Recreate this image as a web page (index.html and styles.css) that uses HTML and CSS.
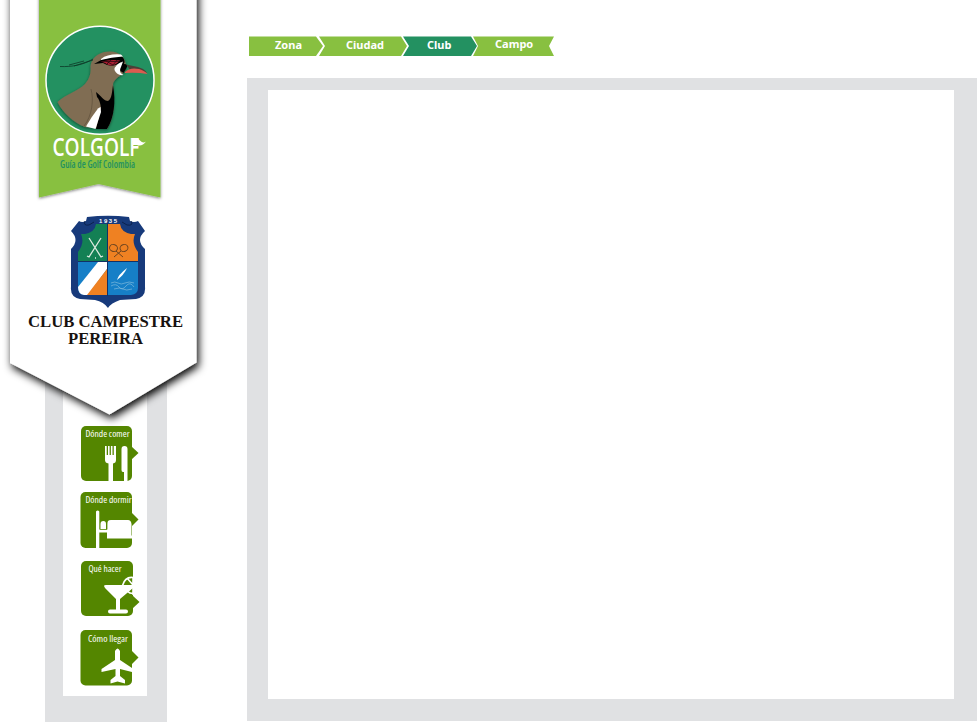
FILE: index.html
```html
<!DOCTYPE html>
<html lang="es">
<head>
<meta charset="utf-8">
<title>Colgolf - Club Campestre Pereira</title>
<link rel="stylesheet" href="styles.css">
</head>
<body>
<div class="page">
  <aside class="sidebar">
    <div class="rail">
      <nav class="services">
        <a class="service">
          <svg viewBox="0 0 60 56"><rect x="1" width="51" height="55" rx="5"/><path d="M51 20L58.500 27L51 34Z"/>
            <text x="5.500" y="11" textLength="44" lengthAdjust="spacingAndGlyphs">Dónde comer</text>
            <path class="ink" d="M25 20h1.700v9h1.300v-9h1.600v9h1.300v-9h1.600v9h1.300v-9H36v14q0 3-3 3.500V55h-4.500V37.500Q25 37 25 34ZM41.500 23q0-3 3-3t3 3v32H44V46h-1q-1.500 0-1.500-2Z"/></svg>
        </a>
        <a class="service">
          <svg viewBox="0 0 60 56"><rect x=".5" width="51.500" height="56" rx="5"/><path d="M51 20L58.500 27.500L51 35Z"/>
            <text x="5.500" y="11" textLength="46" lengthAdjust="spacingAndGlyphs">Dónde dormir</text>
            <path class="ink" d="M16 19.500q1.700-2 3.300 0V37H27v-5q0-4 4-4h17q3 0 3.500 4v11.500h.5V46.500H27V40.500h-7.700V56H16ZM20.500 37v-5q0-3 2.800-3t2.700 3v5Z"/><path class="thin" d="M19.500 37.500H27V29"/></svg>
        </a>
        <a class="service">
          <svg viewBox="0 0 60 56"><rect x="1" width="52" height="55" rx="5"/><path d="M52 34L59.500 41L52 48Z"/>
            <text x="8.500" y="11" textLength="33" lengthAdjust="spacingAndGlyphs">Qué hacer</text>
            <path class="ink" d="M24 25q0-1 2-1h27v3L40 38v10.500h6q2 0 2 2t-2 2H30q-2 0-2-2t2-2h6V38L25 27Z"/><path class="line" d="M53 16.500q-8-1-10.500 8M47 17l6 7M53 16v18M46 24.500q0 8 7 8M53 24.500l-6 6"/></svg>
        </a>
        <a class="service">
          <svg viewBox="0 0 60 56"><rect x=".5" width="51.500" height="55.500" rx="5"/><path d="M51 20L58.500 27.500L51 35Z"/>
            <text x="8" y="12" textLength="40" lengthAdjust="spacingAndGlyphs">Cómo llegar</text>
            <path class="ink" d="M35 21q2.700-5 5 0v9l12 8v4l-12-3v7l5 4v3.500l-7.500-2-7 2V50l5-4v-7L21.500 42v-3l13.500-9Z"/></svg>
        </a>
      </nav>
    </div>
    <svg class="banner" viewBox="0 0 220 430">
      <defs>
        <filter id="deep" x="-20%" y="-10%" width="140%" height="120%"><feDropShadow dx="2" dy="4" stdDeviation="4.500" flood-color="#000" flood-opacity="1"/></filter>
        <filter id="soft" x="-20%" y="-10%" width="140%" height="120%"><feDropShadow dx="0" dy="1" stdDeviation="1.500" flood-opacity=".5"/></filter>
      </defs>
      <path filter="url(#deep)" fill="#fff" d="M10-20H196.500V362.500L109.500 414.500L10 363Z"/>
      <path filter="url(#soft)" fill="#88c040" d="M39-10H160.500V197.500L98.500 184L39 197.500Z"/>
      <circle cx="100" cy="80.300" r="54" fill="#239161" stroke="#fff" stroke-width="1.500"/>
      <g filter="url(#soft)">
        <path fill="#806d52" d="M57.500 102C66 94 78 91 85 84C90 78 91 73 90.500 66C92 56 101 51.500 110 51.500C119 51.500 125 57 126 65C127 75 115 76 113 84C114 96 116 116 107 129L85 127C74 123 62 112 57.500 102Z"/>
      </g>
      <path fill="none" stroke="#5e503c" stroke-width=".7" d="M91 89C94 100 92 116 84 126"/>
      <path fill="#000" d="M96 92C101 96 104 101 108 101C112 99 112 91 113 85C116 102 114 118 107 129H96L101 108Q100 100 97 97Z"/>
      <path fill="#fff" d="M100.500 107L101 112L95.500 129L86 126.500Q92 116 98 108.500Z"/>
      <path fill="#000" d="M94 64L103 59L121 55.500Q126 60 124 64Q129 64 126 69L123.500 73L119 70L121 62Q112 69 103 63Z"/>
      <path fill="#fff" d="M101 59Q108 53.500 121 54.500L123 56.500Q111 57 101 60Z"/>
      <path fill="#a91f31" d="M101 61.500Q112 59 120 60.500Q112 69 105 63Z"/>
      <path fill="none" stroke="#300a10" stroke-width=".8" d="M106 61l7 4l4-5M111 60l-4 4M102 61.500h17"/>
      <path fill="#fff" d="M123 61.500Q114 65 114.500 70Q117 76 123.500 75Q118 72 121 67Z"/>
      <path fill="#4b4038" d="M126 64.500L138 67Q145 69 147 73L130 70Z"/>
      <path fill="#dc5b50" d="M125 72Q130 67 139 69Q145 71 147.500 74Q136 72 125 73Z"/>
      <path fill="none" stroke="#0d3827" stroke-width=".8" d="M93 59C83 65 72 67 60 66.500M93 60L74 66M84 61L69 65"/>
      <text class="brand" x="52.500" y="156" textLength="87" lengthAdjust="spacingAndGlyphs">COLGOLF</text>
      <path fill="#fff" d="M133 138.500Q137 137 140 140.500T146 141.500Q142 147 137 145H133Z"/>
      <text class="tagline" x="60" y="167.500" textLength="75" lengthAdjust="spacingAndGlyphs">Guía de Golf Colombia</text>

      <path fill="#173a7b" d="M87 217Q108 214.500 129 217L130 221Q134 223 138 221L145 231Q135 240 145 249V287Q146 297 136 299L120 300Q111 303 108 308Q104 302 95 300L80 299Q70 297 71 287V249Q80 240 71 231L79 221Q82 223 86 221Z"/>
      <path fill="none" stroke="#0b224e" d="M85 221Q83 226 89 225L94 222M131 221Q134 226 127 225L122 222"/>
      <path fill="#138054" d="M85 234Q95 232 96 224H107V261H78V252Q85 243 81 234Z"/>
      <path fill="#ef8122" d="M108 224H120Q121 232 131 234H135Q131 243 138 252V261H108Z"/>
      <path fill="#167fc7" d="M78 262H107V295H84Q78 294 78 288ZM108 262H138V288Q138 294 131 295H108Z"/>
      <path fill="#fff" d="M98 262H107V269L88 295H84Q78 294 78 287Z"/>
      <path fill="#ef8122" d="M107 269V295H87Z"/>
      <path fill="none" stroke="#102e60" stroke-width=".8" d="M107.500 223V296M78 261.500H138"/>
      <path fill="none" stroke="#dceadf" stroke-width="1.300" d="M89 238L101 257l2-1M101 238L89 257l-2-1M95 258h1"/>
      <g fill="none" stroke="#6c4420"><ellipse cx="113.500" cy="248" rx="4" ry="3.500" transform="rotate(20 113.500 248)"/><ellipse cx="124" cy="248" rx="4" ry="3.500" transform="rotate(-20 124 248)"/><path d="M116 251l7 6M121 251l-7 6"/></g>
      <path fill="#fff" d="M117 280Q118 275 127 268Q124 275 117 280Z"/>
      <path fill="none" stroke="#80badd" stroke-width=".7" d="M111 283q4-2 7 0t7 0t9 0M111 286q5-3 8 1t7-1t8 1M114 289q6-2 9 0t9 0"/>
      <text class="year" x="99" y="223" textLength="18">1935</text>
      <text class="club" x="28" y="327" textLength="155" lengthAdjust="spacingAndGlyphs">CLUB CAMPESTRE</text>
      <text class="club" x="68" y="343.500" textLength="75" lengthAdjust="spacingAndGlyphs">PEREIRA</text>
    </svg>
  </aside>
  <main class="main">
    <nav class="crumbs">
      <a class="crumb first">Zona</a><a class="crumb city">Ciudad</a><a class="crumb active">Club</a><a class="crumb last">Campo</a>
    </nav>
    <section class="frame"></section>
  </main>
</div>
</body>
</html>
```
FILE: styles.css
```css
* { box-sizing: border-box; }
body { margin: 0; background: #fff; overflow: hidden; }
.page { display: grid; grid-template-columns: 247px 730px; height: 723px; }
.sidebar { display: grid; grid-template-columns: 247px; height: 723px; }
.rail, .banner { grid-area: 1 / 1; }
.banner { width: 220px; height: 430px; overflow: hidden; }
.rail {
  width: 122px; height: 352px; margin: 370px 0 0 45px;
  border: solid #e0e1e3; border-width: 0 20px 26px 18px;
  padding: 56px 0 0 17px;
}
.services { display: grid; grid-template-rows: 66px 69px 69px 56px; }
.service, .service svg { display: block; width: 60px; height: 56px; }
.service svg { fill: #548600; overflow: visible; }
.service text { font: 400 9px "Open Sans", sans-serif; font-stretch: 75%; fill: #fff; }
.service .ink { fill: #fff; }
.service .line { fill: none; stroke: #fff; stroke-width: 1.6; }
.service .thin { fill: none; stroke: #548600; stroke-width: .8; }
.brand { font: 600 25px "Open Sans", sans-serif; fill: #fff; }
.tagline { font: 600 10.5px "Open Sans", sans-serif; font-stretch: 75%; fill: #239161; }
.year { font: bold 6px "Liberation Sans", sans-serif; fill: #fff; }
.club { font: bold 16px "Liberation Serif", serif; fill: #17120f; }
.main { padding-top: 36px; }
.crumbs { display: flex; gap: 2px; height: 20px; margin: 0 0 22px 2px; }
.crumb {
  height: 20px; padding-top: 1px; background: #88c040; color: #fff;
  font: bold 11px/15px "Noto Sans", sans-serif; white-space: nowrap;
  clip-path: polygon(0 .5px, calc(100% - 6px) .5px, 100% 50%, calc(100% - 6px) 100%, 0 100%, 6px 50%);
}
.first { width: 74px; padding-left: 26px; margin-right: -6px; clip-path: polygon(0 .5px, calc(100% - 7px) .5px, 100% 50%, calc(100% - 7px) 100%, 0 100%); }
.city { width: 88px; padding-left: 27px; margin-right: -6px; }
.active { width: 74px; padding-left: 24px; margin-right: -6px; background: #239161; }
.last { width: 81px; padding-left: 22px; line-height: 14px; clip-path: polygon(0 .5px, 100% .5px, calc(100% - 5px) 50%, 100% 100%, 0 100%, 5px 50%); }
.frame { width: 730px; height: 643px; border: solid #e0e1e3; border-width: 12px 23px 22px 21px; background: #fff; }
```
